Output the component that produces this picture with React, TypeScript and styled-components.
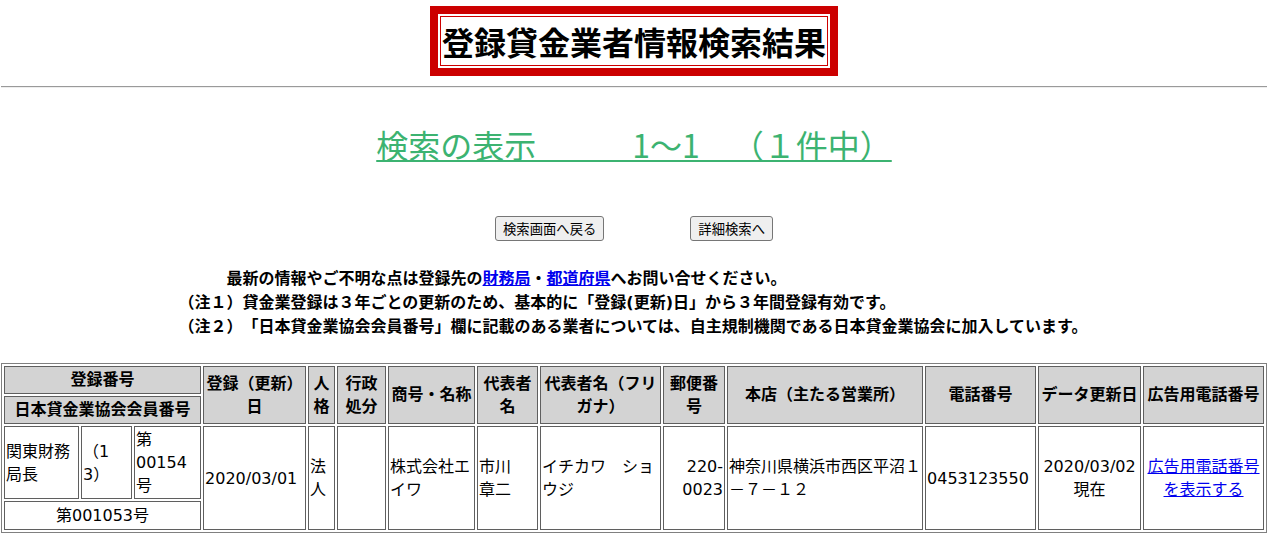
import React from "react";
import styled, { createGlobalStyle } from "styled-components";

const GlobalStyle = createGlobalStyle`
  html, body {
    margin: 0;
    padding: 0;
    background: #ffffff;
  }
  body {
    font-family: "DejaVu Sans", "Noto Sans CJK JP", sans-serif;
    color: #000000;
    text-spacing-trim: space-all;
  }
`;

const Page = styled.div`
  padding: 6px 5px 0 1px;
  display: flex;
  flex-direction: column;
  align-items: stretch;
`;

const TitleRow = styled.div`
  display: flex;
  justify-content: center;
`;

const TitleFrame = styled.div`
  border: 8px solid #cc0000;
  padding: 2px;
`;

const TitleInner = styled.h1`
  margin: 0;
  border: 1px solid #cc0000;
  padding: 0 1px;
  font-family: "Noto Sans CJK JP", sans-serif;
  font-weight: 700;
  font-size: 32px;
  line-height: 48px;
  letter-spacing: 0;
  white-space: nowrap;
`;

const Rule = styled.hr`
  margin: 10px 0 0;
  height: 0;
  border: 0;
  border-top: 1px solid #9a9a9a;
  border-bottom: 1px solid #eeeeee;
`;

const HeadingRow = styled.div`
  display: flex;
  justify-content: center;
  margin-top: 36px;
`;

const ResultHeading = styled.span`
  font-family: "Noto Sans CJK JP", sans-serif;
  font-size: 32px;
  line-height: 40px;
  color: #3cb371;
  text-decoration: underline;
  text-decoration-thickness: 2px;
  text-underline-offset: 2px;
  white-space: pre;
`;

const ButtonRow = styled.div`
  display: flex;
  justify-content: center;
  gap: 86px;
  margin-top: 52px;
`;

const NavButton = styled.button`
  font-family: "Noto Sans CJK JP", sans-serif;
  font-size: 13.333px;
  line-height: 17px;
  padding: 3px 7px;
  background: #efefef;
  color: #000000;
  border: 1px solid #767676;
  border-radius: 3px;
  white-space: nowrap;
`;

const NotesRow = styled.div`
  display: flex;
  justify-content: center;
  margin-top: 26px;
`;

const Notes = styled.div`
  padding-right: 2px;
  font-weight: 700;
  font-size: 16px;
  line-height: 24px;
  white-space: nowrap;
`;

const NoteLine = styled.div``;

const Link = styled.a`
  color: #0000ee;
  text-decoration: underline;
`;

const ResultTable = styled.table`
  margin-top: 24px;
  width: 1266px;
  table-layout: fixed;
  border-collapse: separate;
  border-spacing: 2px;
  border: 1px solid #808080;
  font-size: 16px;
  line-height: 23px;
`;

const HeadCell = styled.th`
  box-sizing: border-box;
  background: #d3d3d3;
  border: 1px solid #5f5f5f;
  padding: 1px 1px 2px;
  font-weight: 700;
  text-align: center;
  vertical-align: middle;
`;

const Cell = styled.td<{
  $align?: "left" | "center" | "right";
  $breakAll?: boolean;
  $roomy?: boolean;
}>`
  box-sizing: border-box;
  border: 1px solid #5f5f5f;
  padding: ${(p) => (p.$roomy ? "2px 1px" : "1px")};
  font-weight: 400;
  text-align: ${(p) => p.$align ?? "left"};
  vertical-align: middle;
  word-break: ${(p) => (p.$breakAll ? "break-all" : "normal")};
`;

const colWidths = [75, 51, 67, 103, 27, 49, 87, 61, 121, 62, 196, 111, 103, 121];

export default function App() {
  return (
    <>
      <GlobalStyle />
      <Page>
        <TitleRow>
          <TitleFrame>
            <TitleInner>登録貸金業者情報検索結果</TitleInner>
          </TitleFrame>
        </TitleRow>
        <Rule />
        <HeadingRow>
          <ResultHeading>{"検索の表示　　　1～1　（１件中）"}</ResultHeading>
        </HeadingRow>
        <ButtonRow>
          <NavButton type="button">検索画面へ戻る</NavButton>
          <NavButton type="button">詳細検索へ</NavButton>
        </ButtonRow>
        <NotesRow>
          <Notes>
            <NoteLine>
              {"　　　最新の情報やご不明な点は登録先の"}
              <Link href="#">財務局</Link>・<Link href="#">都道府県</Link>
              へお問い合せください。
            </NoteLine>
            <NoteLine>
              （注１）貸金業登録は３年ごとの更新のため、基本的に「登録(更新)日」から３年間登録有効です。
            </NoteLine>
            <NoteLine>
              （注２）「日本貸金業協会会員番号」欄に記載のある業者については、自主規制機関である日本貸金業協会に加入しています。
            </NoteLine>
          </Notes>
        </NotesRow>
        <ResultTable>
          <colgroup>
            {colWidths.map((w, i) => (
              <col key={i} style={{ width: w }} />
            ))}
          </colgroup>
          <thead>
            <tr>
              <HeadCell colSpan={3}>登録番号</HeadCell>
              <HeadCell rowSpan={2}>登録（更新）日</HeadCell>
              <HeadCell rowSpan={2}>人格</HeadCell>
              <HeadCell rowSpan={2}>行政処分</HeadCell>
              <HeadCell rowSpan={2}>商号・名称</HeadCell>
              <HeadCell rowSpan={2}>代表者名</HeadCell>
              <HeadCell rowSpan={2}>代表者名（フリガナ）</HeadCell>
              <HeadCell rowSpan={2}>郵便番号</HeadCell>
              <HeadCell rowSpan={2}>本店（主たる営業所）</HeadCell>
              <HeadCell rowSpan={2}>電話番号</HeadCell>
              <HeadCell rowSpan={2}>データ更新日</HeadCell>
              <HeadCell rowSpan={2}>広告用電話番号</HeadCell>
            </tr>
            <tr>
              <HeadCell colSpan={3}>日本貸金業協会会員番号</HeadCell>
            </tr>
          </thead>
          <tbody>
            <tr>
              <Cell>関東財務局長</Cell>
              <Cell $breakAll>（13）</Cell>
              <Cell>第00154号</Cell>
              <Cell rowSpan={2}>2020/03/01</Cell>
              <Cell rowSpan={2}>法人</Cell>
              <Cell rowSpan={2}></Cell>
              <Cell rowSpan={2}>株式会社エイワ</Cell>
              <Cell rowSpan={2}>市川　章二</Cell>
              <Cell rowSpan={2}>イチカワ　ショウジ</Cell>
              <Cell rowSpan={2} $align="right">
                220-<wbr />0023
              </Cell>
              <Cell rowSpan={2}>神奈川県横浜市西区平沼１－７－１２</Cell>
              <Cell rowSpan={2}>0453123550</Cell>
              <Cell rowSpan={2} $align="center">
                2020/03/02
                <br />
                現在
              </Cell>
              <Cell rowSpan={2} $align="center">
                <Link href="#">広告用電話番号を表示する</Link>
              </Cell>
            </tr>
            <tr>
              <Cell colSpan={3} $align="center" $roomy>
                第001053号
              </Cell>
            </tr>
          </tbody>
        </ResultTable>
      </Page>
    </>
  );
}
